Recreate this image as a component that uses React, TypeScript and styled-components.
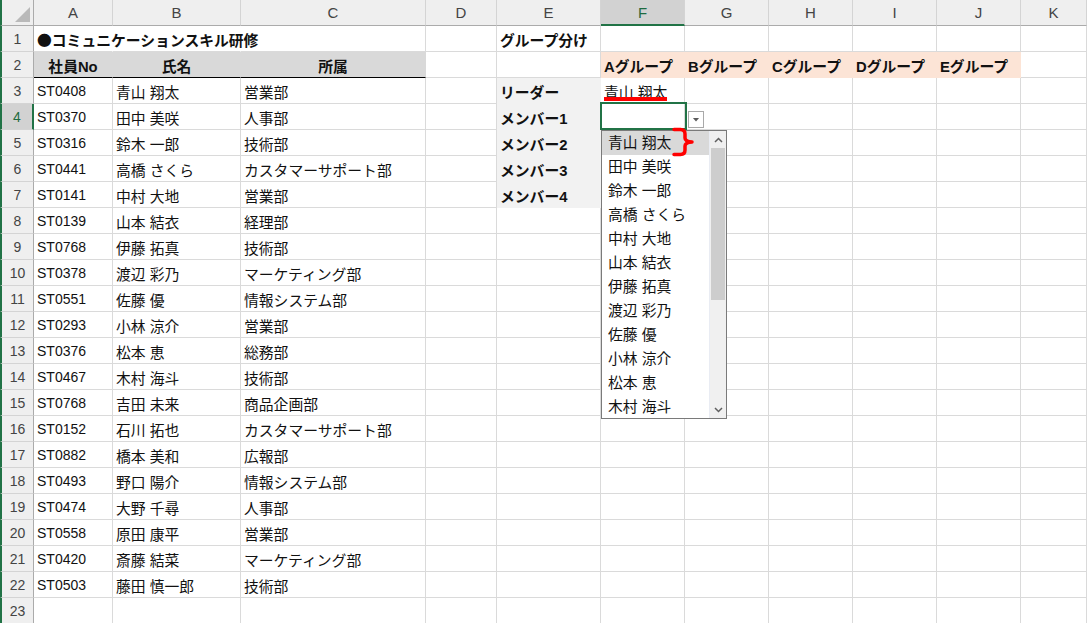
import React from 'react';
import styled, { createGlobalStyle } from 'styled-components';

const GlobalStyle = createGlobalStyle`
  html, body { margin: 0; padding: 0; background: #ffffff; }
  body { font-family: 'Liberation Sans', 'Noto Sans CJK JP', sans-serif; }
  * { box-sizing: border-box; }
`;

const GREEN = '#217346';
const GRID = '#dadada';

const LETTERS = ['A', 'B', 'C', 'D', 'E', 'F', 'G', 'H', 'I', 'J', 'K'];

type Spec = {
  text?: string;
  bold?: boolean;
  center?: boolean;
  fill?: string;
  noRight?: boolean;
  darkBottom?: boolean;
  cjk?: boolean;
  latin?: boolean;
};

const people: [string, string, string][] = [
  ['ST0408', '青山 翔太', '営業部'],
  ['ST0370', '田中 美咲', '人事部'],
  ['ST0316', '鈴木 一郎', '技術部'],
  ['ST0441', '高橋 さくら', 'カスタマーサポート部'],
  ['ST0141', '中村 大地', '営業部'],
  ['ST0139', '山本 結衣', '経理部'],
  ['ST0768', '伊藤 拓真', '技術部'],
  ['ST0378', '渡辺 彩乃', 'マーケティング部'],
  ['ST0551', '佐藤 優', '情報システム部'],
  ['ST0293', '小林 涼介', '営業部'],
  ['ST0376', '松本 恵', '総務部'],
  ['ST0467', '木村 海斗', '技術部'],
  ['ST0768', '吉田 未来', '商品企画部'],
  ['ST0152', '石川 拓也', 'カスタマーサポート部'],
  ['ST0882', '橋本 美和', '広報部'],
  ['ST0493', '野口 陽介', '情報システム部'],
  ['ST0474', '大野 千尋', '人事部'],
  ['ST0558', '原田 康平', '営業部'],
  ['ST0420', '斎藤 結菜', 'マーケティング部'],
  ['ST0503', '藤田 慎一郎', '技術部'],
];

const listNames = people.slice(0, 12).map((p) => p[1]);

function buildSheet(): Spec[][] {
  const rows: Spec[][] = [];
  for (let r = 1; r <= 23; r++) {
    rows.push(LETTERS.map(() => ({} as Spec)));
  }
  const set = (r: number, c: number, s: Spec) => {
    rows[r - 1][c] = { ...rows[r - 1][c], ...s };
  };
  set(1, 0, { text: '●コミュニケーションスキル研修', bold: true, noRight: true, cjk: true });
  set(1, 1, { noRight: true });
  set(1, 4, { text: 'グループ分け', bold: true });
  ['社員No', '氏名', '所属'].forEach((t, i) =>
    set(2, i, { text: t, bold: true, center: true, fill: '#d9d9d9', darkBottom: true })
  );
  ['A', 'B', 'C', 'D', 'E'].forEach((g, i) =>
    set(2, 5 + i, { text: `${g}グループ`, bold: true, fill: '#fce4d6' })
  );
  people.forEach((p, i) => {
    set(3 + i, 0, { text: p[0], latin: true });
    set(3 + i, 1, { text: p[1] });
    set(3 + i, 2, { text: p[2] });
  });
  ['リーダー', 'メンバー1', 'メンバー2', 'メンバー3', 'メンバー4'].forEach((t, i) =>
    set(3 + i, 4, { text: t, bold: true, fill: '#f2f2f2' })
  );
  set(3, 5, { text: '青山 翔太' });
  return rows;
}

const Frame = styled.div`
  position: relative;
  width: 1087px;
  height: 623px;
  overflow: hidden;
  background: #ffffff;
`;

const Sheet = styled.div`
  display: grid;
  grid-template-columns: 34px 79px 128px 185px 71px 104px 84px 84px 84px 84px 84px 1fr;
  grid-auto-rows: 26px;
`;

const Corner = styled.div`
  background: #efefef;
  border-left: 2px solid ${GREEN};
  border-right: 1px solid #ababab;
  border-bottom: 1px solid #ababab;
  display: flex;
  align-items: flex-end;
  justify-content: flex-end;
  padding: 0 3px 3px 0;
`;

const CornerTriangle = styled.div`
  width: 15px;
  height: 15px;
  background: #b9b9b9;
  clip-path: polygon(100% 0, 100% 100%, 0 100%);
`;

const ColHead = styled.div<{ $active?: boolean }>`
  background: ${(p) => (p.$active ? '#d2d2d2' : '#efefef')};
  border-right: 1px solid #d4d4d4;
  border-bottom: ${(p) => (p.$active ? `2px solid ${GREEN}` : '1px solid #ababab')};
  color: ${(p) => (p.$active ? '#1e6b41' : '#444444')};
  font-size: 15px;
  display: flex;
  align-items: center;
  justify-content: center;
  padding-top: ${(p) => (p.$active ? '1px' : '0')};
`;

const RowHead = styled.div<{ $active?: boolean }>`
  background: ${(p) => (p.$active ? '#d2d2d2' : '#efefef')};
  border-left: 2px solid ${GREEN};
  border-right: ${(p) => (p.$active ? `2px solid ${GREEN}` : '1px solid #ababab')};
  border-bottom: 1px solid #d4d4d4;
  color: ${(p) => (p.$active ? '#1e6b41' : '#444444')};
  font-size: 14px;
  display: flex;
  align-items: center;
  justify-content: center;
`;

const Cell = styled.div<{
  $bold?: boolean;
  $center?: boolean;
  $fill?: string;
  $noRight?: boolean;
  $darkBottom?: boolean;
  $cjk?: boolean;
  $latin?: boolean;
}>`
  position: relative;
  background: ${(p) => p.$fill || 'transparent'};
  border-right: 1px solid ${(p) => (p.$noRight ? 'transparent' : p.$fill || GRID)};
  border-bottom: 1px solid
    ${(p) => (p.$darkBottom ? '#000000' : p.$fill || GRID)};
  display: flex;
  align-items: center;
  justify-content: ${(p) => (p.$center ? 'center' : 'flex-start')};
  padding: 1px 3px 0;
  font-size: ${(p) => (p.$latin ? '14px' : '14.8px')};
  font-weight: ${(p) => (p.$bold ? 700 : 400)};
  font-family: ${(p) =>
    p.$cjk
      ? "'Noto Sans CJK JP', sans-serif"
      : "'Liberation Sans', 'Noto Sans CJK JP', sans-serif"};
  color: #111111;
  white-space: nowrap;
  overflow: visible;
  z-index: ${(p) => (p.$noRight ? 2 : 1)};
`;

const Selection = styled.div`
  position: absolute;
  left: 600px;
  top: 102px;
  width: 87px;
  height: 28px;
  border: 2px solid ${GREEN};
  z-index: 5;
`;

const RedUnderline = styled.div`
  position: absolute;
  left: 604px;
  top: 97px;
  width: 63px;
  height: 4px;
  background: #ff0000;
  z-index: 5;
`;

const DropButton = styled.div`
  position: absolute;
  left: 688px;
  top: 111px;
  width: 16px;
  height: 17px;
  border: 1px solid #a9a9a9;
  background: #ffffff;
  display: flex;
  align-items: center;
  justify-content: center;
  z-index: 6;
`;

const DropTriangle = styled.div`
  width: 7px;
  height: 4px;
  background: #5b5b5b;
  clip-path: polygon(0 0, 100% 0, 50% 100%);
`;

const List = styled.div`
  position: absolute;
  left: 601px;
  top: 130px;
  width: 126px;
  height: 289px;
  border: 1px solid #7a7a7a;
  background: #ffffff;
  display: flex;
  z-index: 6;
`;

const Items = styled.div`
  flex: 1;
  display: flex;
  flex-direction: column;
  overflow: hidden;
`;

const Item = styled.div<{ $hover?: boolean }>`
  height: 24px;
  flex-shrink: 0;
  line-height: 24px;
  padding-left: 6px;
  font-size: 14.8px;
  color: #111111;
  white-space: nowrap;
  background: ${(p) => (p.$hover ? '#d9d9d9' : 'transparent')};
`;

const Scrollbar = styled.div`
  width: 17px;
  background: #f0f0f0;
  border-left: 1px solid #e9ecf3;
  display: flex;
  flex-direction: column;
`;

const ScrollArrow = styled.div`
  height: 17px;
  display: flex;
  align-items: center;
  justify-content: center;
  flex-shrink: 0;
`;

const Thumb = styled.div`
  height: 152px;
  margin: 0 1px;
  background: #cdcdcd;
  flex-shrink: 0;
`;

const Track = styled.div`
  flex: 1;
`;

const Bracket = styled.svg`
  position: absolute;
  left: 668px;
  top: 124px;
  width: 30px;
  height: 36px;
  z-index: 7;
  overflow: visible;
`;

const Chevron = ({ up }: { up?: boolean }) => (
  <svg width="9" height="6" viewBox="0 0 9 6">
    <polyline
      points={up ? '1,5 4.5,1.5 8,5' : '1,1 4.5,4.5 8,1'}
      fill="none"
      stroke="#606060"
      strokeWidth="1.5"
    />
  </svg>
);

export default function App() {
  const sheet = buildSheet();
  return (
    <Frame>
      <GlobalStyle />
      <Sheet>
        <Corner>
          <CornerTriangle />
        </Corner>
        {LETTERS.map((l) => (
          <ColHead key={l} $active={l === 'F'}>
            {l}
          </ColHead>
        ))}
        {sheet.map((row, ri) => (
          <React.Fragment key={ri}>
            <RowHead $active={ri === 3}>{ri + 1}</RowHead>
            {row.map((c, ci) => (
              <Cell
                key={ci}
                $bold={c.bold}
                $center={c.center}
                $fill={c.fill}
                $noRight={c.noRight}
                $darkBottom={c.darkBottom}
                $cjk={c.cjk}
                $latin={c.latin}
              >
                {c.text}
              </Cell>
            ))}
          </React.Fragment>
        ))}
      </Sheet>

      <RedUnderline />
      <Selection />
      <DropButton>
        <DropTriangle />
      </DropButton>
      <List>
        <Items>
          {listNames.map((n, i) => (
            <Item key={n} $hover={i === 0}>
              {n}
            </Item>
          ))}
        </Items>
        <Scrollbar>
          <ScrollArrow>
            <Chevron up />
          </ScrollArrow>
          <Thumb />
          <Track />
          <ScrollArrow>
            <Chevron />
          </ScrollArrow>
        </Scrollbar>
      </List>
      <Bracket viewBox="668 124 30 36">
        <path
          d="M674 129.5 H680.5 Q685 129.5 685 134 V138 Q685 141.5 692 142 Q685 142.5 685 146 V150 Q685 154.5 680.5 154.5 H674"
          fill="none"
          stroke="#ff0000"
          strokeWidth="3.5"
          strokeLinecap="round"
          strokeLinejoin="round"
        />
      </Bracket>
    </Frame>
  );
}
